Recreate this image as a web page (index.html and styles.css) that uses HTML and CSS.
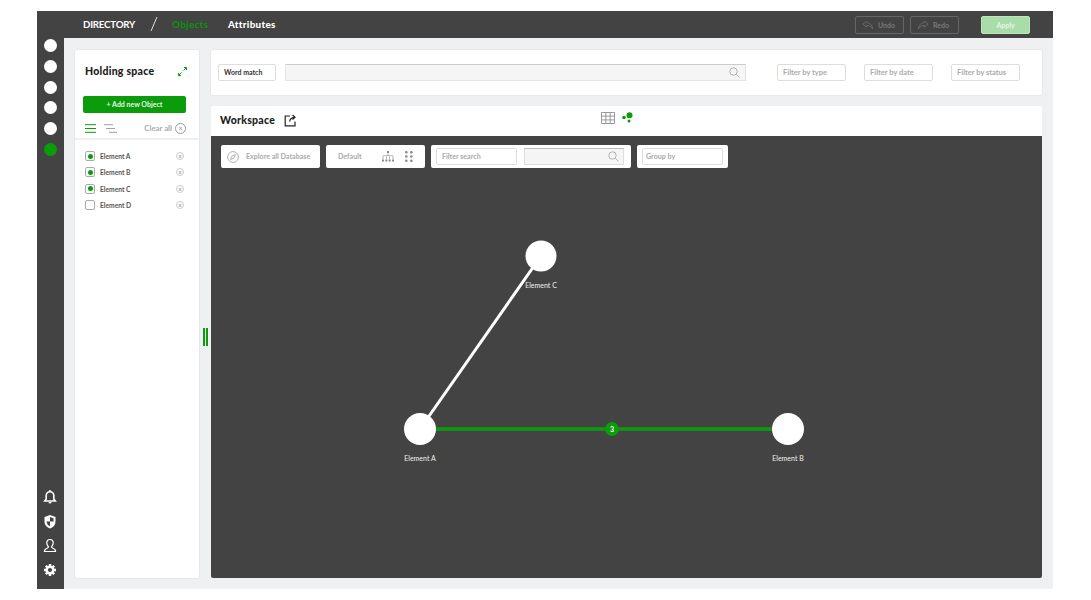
FILE: index.html
```html
<!DOCTYPE html>
<html lang="en">
<head>
  <meta charset="UTF-8" />
  <title>Directory - Objects</title>
  <link rel="stylesheet" href="styles.css">
</head>
<body>
  <div class="app">
    <header class="top-bar">
      <div class="crumbs">
        <span class="brand">DIRECTORY</span>
        <svg class="slash" width="8" height="16" viewBox="0 0 8 16"><path d="M7 1 1 15" /></svg>
        <span class="tab tab-active">Objects</span>
        <span class="tab">Attributes</span>
      </div>
      <div class="actions">
        <button class="ghost-btn">
          <svg width="12" height="10" viewBox="0 0 14 11"><path d="M5.500 1 1 4.500 5.500 8V6c3 0 5 1 7 4-.5-4-3-7-7-7.500z" /></svg>
          Undo
        </button>
        <button class="ghost-btn">
          <svg width="12" height="10" viewBox="0 0 14 11"><path d="M8.500 1 13 4.500 8.500 8V6c-3 0-5 1-7 4 .5-4 3-7 7-7.500z" /></svg>
          Redo
        </button>
        <button class="apply-btn">Apply</button>
      </div>
    </header>

    <div class="body-row">
      <nav class="side-nav">
        <div class="nav-dots">
          <span class="dot"></span>
          <span class="dot"></span>
          <span class="dot"></span>
          <span class="dot"></span>
          <span class="dot"></span>
          <span class="dot dot-active"></span>
        </div>
        <div class="nav-icons">
          <svg width="14" height="15" viewBox="0 0 14 15"><path class="line-bell" d="M3.200 10V6.500a3.800 3.800 0 0 1 7.600 0V10l1.500 2H1.700z" /><path class="fill-w" d="M5.500 13h3a1.500 1.500 0 0 1-3 0zM6.200 1h1.600v2H6.200z" /></svg>
          <svg width="14" height="15" viewBox="0 0 14 15"><path class="fill-w" d="M7 1l5.500 2v4.500C12.500 11 10 13.500 7 14.500 4 13.500 1.500 11 1.500 7.500V3z" /><path class="fill-d" d="M7 3 10.500 4.300V7.500H7zM7 7.500v4.800c-1.800-.8-3.300-2.600-3.500-4.800z" /></svg>
          <svg width="14" height="15" viewBox="0 0 14 15"><path class="line-w" d="M7 1.500c2 0 3.200 1.500 3.200 3.500S9 8 8.500 9c0 1 3.500 1.500 4 3.500v1h-11v-1c.5-2 4-2.500 4-3.500C5 8 3.800 7 3.800 5S5 1.500 7 1.500z" /></svg>
          <svg width="14" height="14" viewBox="0 0 14 14"><path class="line-gear" d="M7 1v2M7 11v2M1 7h2M11 7h2M2.800 2.800l1.400 1.400M9.800 9.800l1.400 1.400M2.800 11.200l1.400-1.400M9.800 4.200l1.400-1.400" /><circle class="line-ring" cx="7" cy="7" r="3.300" /></svg>
        </div>
      </nav>

      <aside class="holding">
        <div class="holding-head">
          <h2>Holding space</h2>
          <svg width="9" height="9" viewBox="0 0 9 9"><path class="line-g" d="M5.500 3.500 8.500.5M3.500 5.500l-3 3M6 .5h2.500V3M.5 6v2.500H3" /></svg>
        </div>
        <button class="add-btn">+ Add new Object</button>
        <div class="list-tools">
          <svg width="12" height="9" viewBox="0 0 12 9"><path class="line-g" d="M0 .7h11M0 4.500h11M0 8.300h11" /></svg>
          <svg class="sort-icon" width="14" height="9" viewBox="0 0 14 9"><path class="line-s" d="M0 .7h9M2 4.500h9M5 8.300h8" /></svg>
          <span class="clear-all">Clear all</span>
          <span class="x-ring x-ring-lg">×</span>
        </div>
        <ul class="elements">
          <li><span class="check check-on"></span><span class="el-name">Element A</span><span class="x-ring">×</span></li>
          <li><span class="check check-on"></span><span class="el-name">Element B</span><span class="x-ring">×</span></li>
          <li><span class="check check-on"></span><span class="el-name">Element C</span><span class="x-ring">×</span></li>
          <li><span class="check"></span><span class="el-name">Element D</span><span class="x-ring">×</span></li>
        </ul>
      </aside>

      <div class="handle"><span></span><span></span></div>

      <main class="main">
        <section class="filters">
          <div class="field field-match">Word match</div>
          <div class="search-box">
            <svg width="11" height="11" viewBox="0 0 11 11"><circle class="line-m" cx="4.500" cy="4.500" r="3.700" /><path class="line-m" d="M7.300 7.300 10.500 10.500" /></svg>
          </div>
          <div class="field field-filter">Filter by type</div>
          <div class="field field-filter">Filter by date</div>
          <div class="field field-filter">Filter by status</div>
        </section>

        <section class="workspace">
          <div class="ws-head">
            <h2>Workspace</h2>
            <svg width="13" height="13" viewBox="0 0 13 13"><path class="line-k" d="M6 2H1.200v9.800H11V7.500M5.500 7.500C6 5 7.500 3.500 10.500 3.300M8.500 1l2.500 2.300L8.500 5.500" /></svg>
            <div class="view-icons">
              <svg width="14" height="12" viewBox="0 0 14 12"><path class="line-t" d="M.5.500h13v11H.5zM.5 4.200h13M.5 7.900h13M4.800.5v11M9.200.5v11" /></svg>
              <svg width="11" height="11" viewBox="0 0 11 11"><circle class="fill-g" cx="7.500" cy="3.200" r="3" /><circle class="fill-g" cx="2" cy="5.500" r="1.800" /><circle class="fill-g" cx="7" cy="9" r="1.500" /></svg>
            </div>
          </div>

          <div class="canvas">
            <div class="toolbar">
              <div class="tool tool-explore">
                <svg width="12" height="12" viewBox="0 0 12 12"><circle class="line-m" cx="6" cy="6" r="5.400" /><path class="line-m" d="M8.500 3.500 5 5 3.500 8.500 7 7z" /></svg>
                <span>Explore all Database</span>
              </div>
              <div class="tool tool-default">
                <span>Default</span>
                <svg class="tree-icon" width="12" height="11" viewBox="0 0 12 11"><path class="fill-m" d="M5 0h2v2H5zM0 8.500h2v2H0zM3.300 8.500h2v2h-2zM6.700 8.500h2v2h-2zM10 8.500h2v2h-2zM5.700 2h.6v3H5.700zM1 4.500h10v.6H1zM.7 5h.6v3H.7zM4 5h.6v3H4zM7.400 5H8v3h-.6zM10.700 5h.6v3h-.6z" /></svg>
                <svg class="grid-icon" width="8" height="11" viewBox="0 0 8 11"><g class="fill-m"><circle cx="1.300" cy="1.300" r="1.300" /><circle cx="6.300" cy="1.300" r="1.300" /><circle cx="1.300" cy="5.500" r="1.300" /><circle cx="6.300" cy="5.500" r="1.300" /><circle cx="1.300" cy="9.700" r="1.300" /><circle cx="6.300" cy="9.700" r="1.300" /></g></svg>
              </div>
              <div class="tool tool-search">
                <div class="tool-input">Filter search</div>
                <div class="tool-query">
                  <svg width="11" height="11" viewBox="0 0 11 11"><circle class="line-m" cx="4.500" cy="4.500" r="3.700" /><path class="line-m" d="M7.300 7.300 10.500 10.500" /></svg>
                </div>
              </div>
              <div class="tool tool-group">
                <div class="tool-input tool-input-wide">Group by</div>
              </div>
            </div>

            <svg class="graph" width="831" height="442" viewBox="0 0 831 442">
              <line x1="209" y1="293" x2="330" y2="120" stroke="#fff" stroke-width="3" />
              <line x1="209" y1="293" x2="577" y2="293" stroke="#0a9c0a" stroke-width="3.500" />
              <circle cx="330" cy="120" r="15.500" fill="#fff" />
              <circle cx="209" cy="293" r="16" fill="#fff" />
              <circle cx="577" cy="293" r="16" fill="#fff" />
              <circle cx="401" cy="293" r="7" fill="#0a9c0a" />
              <text x="401" y="295.500" class="badge-num">3</text>
              <text x="330" y="152" class="node-label">Element C</text>
              <text x="209" y="325" class="node-label">Element A</text>
              <text x="577" y="325" class="node-label">Element B</text>
            </svg>
          </div>
        </section>
      </main>
    </div>
  </div>
</body>
</html>
```

FILE: styles.css
```css
body {
  margin: 0;
  background: #fff;
  font-family: "Lato", "Liberation Sans", sans-serif;
}
h2 {
  margin: 0;
  font-size: 10.5px;
  font-weight: 900;
  color: #1c1c1c;
  letter-spacing: 0.25px;
}
ul {
  margin: 0;
  padding: 0;
  list-style: none;
}
button {
  font-family: inherit;
  cursor: pointer;
}
svg {
  display: block;
  flex: none;
}

.app {
  margin: 11px 38px 11px 37px;
  height: 578px;
  display: flex;
  flex-direction: column;
  background: #eef0f2;
}

/* top bar */
.top-bar {
  height: 27px;
  flex: none;
  background: #434343;
  display: flex;
  justify-content: space-between;
  align-items: center;
  padding: 0 23px 0 46px;
}
.crumbs {
  display: flex;
  align-items: center;
  color: #fff;
  padding-bottom: 2px;
}
.brand {
  font-size: 9.700px;
  font-weight: 700;
  letter-spacing: -0.2px;
  width: 67px;
}
.slash {
  fill: none;
  stroke: #ddd;
  stroke-width: 1;
  margin-right: 14px;
}
.tab {
  font-size: 9.800px;
  font-weight: 900;
  width: 56px;
  letter-spacing: 0.3px;
}
.tab-active {
  color: #0b900b;
}
.actions {
  display: flex;
  align-items: center;
}
.ghost-btn {
  width: 49px;
  height: 18px;
  margin-right: 6px;
  padding: 0 0 0 6px;
  display: flex;
  align-items: center;
  gap: 4px;
  background: none;
  border: 1px solid #666;
  border-radius: 2px;
  color: #777;
  font-size: 7px;
  font-weight: 700;
}
.ghost-btn svg {
  fill: none;
  stroke: #777;
  stroke-width: 0.8;
}
.apply-btn {
  width: 49px;
  height: 18px;
  margin-left: 16px;
  padding: 0;
  background: #a8dca8;
  border: 1px solid #bde6bd;
  border-radius: 2px;
  color: #e8f6e8;
  font-size: 7px;
  font-weight: 700;
}

.body-row {
  flex: 1;
  min-height: 0;
  display: flex;
}

/* left rail */
.side-nav {
  width: 27px;
  flex: none;
  background: #434343;
  display: flex;
  flex-direction: column;
  justify-content: space-between;
  align-items: center;
  padding: 1px 1px 12px 0;
  box-sizing: border-box;
}
.nav-dots {
  display: flex;
  flex-direction: column;
  gap: 7.800px;
}
.dot {
  width: 13px;
  height: 13px;
  border-radius: 50%;
  background: #fff;
}
.dot-active {
  background: #0a9c0a;
  margin-top: 0.500px;
}
.nav-icons {
  display: flex;
  flex-direction: column;
  align-items: center;
  gap: 9.700px;
}
.line-w {
  fill: none;
  stroke: #fff;
  stroke-width: 1.200;
}
.line-bell {
  fill: none;
  stroke: #fff;
  stroke-width: 1.600;
}
.fill-w {
  fill: #fff;
}
.fill-d {
  fill: #434343;
}
.line-gear {
  fill: none;
  stroke: #fff;
  stroke-width: 2.400;
}
.line-ring {
  fill: none;
  stroke: #fff;
  stroke-width: 2.400;
}

/* holding space */
.holding {
  width: 124px;
  flex: none;
  margin: 12px 0 11px 11px;
  background: #fff;
  border-radius: 2px;
  box-shadow: 0 0 2px rgba(0, 0, 0, 0.12);
  box-sizing: border-box;
}
.holding-head {
  height: 46px;
  display: flex;
  align-items: center;
  justify-content: space-between;
  padding: 0 12px 4px 10px;
  box-sizing: border-box;
}
.line-g {
  fill: none;
  stroke: #0a9c0a;
  stroke-width: 1;
}
.add-btn {
  display: block;
  width: 103px;
  height: 17px;
  margin: 0 0 0 8px;
  padding: 0 0 2px;
  background: #0a9c0a;
  border: none;
  border-radius: 2px;
  color: #e6f5e6;
  font-size: 7px;
  font-weight: 700;
}
.list-tools {
  height: 27px;
  display: flex;
  align-items: center;
  padding: 5px 13px 0 10px;
  border-bottom: 2px solid #eef0f2;
  box-sizing: border-box;
}
.sort-icon {
  margin-left: 7px;
}
.line-s {
  fill: none;
  stroke: #888;
  stroke-width: 0.8;
}
.clear-all {
  margin-left: auto;
  margin-right: 3px;
  font-size: 7.800px;
  color: #aaa;
  font-weight: 700;
}
.x-ring {
  width: 6px;
  height: 6px;
  border: 1px solid #ccc;
  border-radius: 50%;
  color: #aaa;
  font-size: 7px;
  line-height: 6px;
  text-align: center;
  flex: none;
}
.x-ring-lg {
  width: 9px;
  height: 9px;
  line-height: 9px;
  border-color: #999;
  color: #888;
}
.elements {
  padding: 8px 15px 0 10px;
}
.elements li {
  height: 16.300px;
  display: flex;
  align-items: center;
  font-size: 6.700px;
  font-weight: 700;
  color: #555;
}
.check {
  width: 8px;
  height: 8px;
  border: 1px solid #aaa;
  border-radius: 2px;
  margin-right: 5px;
  position: relative;
  flex: none;
}
.check-on::after {
  content: "";
  position: absolute;
  left: 1.500px;
  top: 1.500px;
  width: 5px;
  height: 5px;
  border-radius: 50%;
  background: #0a9c0a;
}
.el-name {
  flex: 1;
}

/* splitter */
.handle {
  width: 12px;
  flex: none;
  display: flex;
  justify-content: center;
  align-items: center;
  gap: 1px;
  padding-top: 46px;
  box-sizing: border-box;
}
.handle span {
  width: 2px;
  height: 18px;
  background: #0a9c0a;
}

.main {
  flex: 1;
  min-width: 0;
  display: flex;
  flex-direction: column;
  padding: 12px 11px 11px 0;
  gap: 11px;
}

/* filter card */
.filters {
  height: 45px;
  flex: none;
  background: #fff;
  border-radius: 2px;
  box-shadow: 0 0 2px rgba(0, 0, 0, 0.12);
  display: flex;
  align-items: center;
  padding: 0 22px 1px 7px;
  box-sizing: border-box;
}
.field {
  height: 17px;
  box-sizing: border-box;
  border: 1px solid #ddd;
  border-radius: 2px;
  font-size: 7.500px;
  font-weight: 700;
  line-height: 15px;
  padding-left: 5px;
  color: #aaa;
}
.field-match {
  width: 58px;
  margin-right: 9px;
  font-size: 7px;
  color: #333;
}
.field-filter {
  width: 69px;
  margin-left: 18px;
}
.field-filter:nth-of-type(3) {
  margin-left: 31px;
}
.search-box {
  width: 461px;
  height: 17px;
  box-sizing: border-box;
  background: #f5f5f5;
  border: 1px solid #e4e4e4;
  border-top-color: #ccc;
  display: flex;
  align-items: center;
  justify-content: flex-end;
  padding-right: 5px;
}
.line-m {
  fill: none;
  stroke: #aaa;
  stroke-width: 0.9;
}
.fill-m {
  fill: #888;
}

/* workspace */
.workspace {
  flex: 1;
  min-height: 0;
  display: flex;
  flex-direction: column;
  border-radius: 2px;
  overflow: hidden;
}
.ws-head {
  height: 30px;
  flex: none;
  background: #fff;
  display: flex;
  align-items: center;
  padding: 0 0 2px 9px;
  box-sizing: border-box;
  gap: 9px;
  position: relative;
}
.line-k {
  fill: none;
  stroke: #222;
  stroke-width: 1.200;
}
.line-t {
  fill: none;
  stroke: #999;
  stroke-width: 1;
}
.fill-g {
  fill: #0a9c0a;
}
.view-icons {
  position: absolute;
  left: 390px;
  top: 6px;
  display: flex;
  gap: 7px;
}
.canvas {
  flex: 1;
  position: relative;
  background: #434343;
}
.toolbar {
  position: absolute;
  left: 10px;
  top: 9px;
  display: flex;
  gap: 6px;
}
.tool {
  height: 23px;
  box-sizing: border-box;
  background: #fff;
  border-radius: 2px;
  display: flex;
  align-items: center;
  font-size: 7.100px;
  font-weight: 700;
  color: #aaa;
}
.tool-explore {
  width: 99px;
  padding-left: 6px;
  gap: 7px;
}
.tool-default {
  width: 99px;
  padding-left: 12px;
}
.tree-icon {
  margin-left: 20px;
}
.grid-icon {
  margin-left: 11px;
}
.tool-search {
  width: 200px;
  padding-left: 5px;
}
.tool-input {
  width: 81px;
  height: 17px;
  box-sizing: border-box;
  border: 1px solid #ddd;
  border-radius: 2px;
  line-height: 15px;
  padding-left: 5px;
}
.tool-input-wide {
  width: 81px;
  border-width: 1.500px;
  padding-left: 3px;
}
.tool-query {
  width: 100px;
  height: 17px;
  margin-left: 7px;
  box-sizing: border-box;
  background: #f5f5f5;
  border: 1px solid #ddd;
  border-top-color: #bbb;
  display: flex;
  align-items: center;
  justify-content: flex-end;
  padding-right: 4px;
}
.tool-group {
  width: 91px;
  padding-left: 5px;
}
.graph {
  position: absolute;
  left: 0;
  top: 0;
}
.node-label {
  fill: #f0f0f0;
  font-size: 7px;
  text-anchor: middle;
}
.badge-num {
  fill: #fff;
  font-size: 7px;
  font-weight: 700;
  text-anchor: middle;
}
```
